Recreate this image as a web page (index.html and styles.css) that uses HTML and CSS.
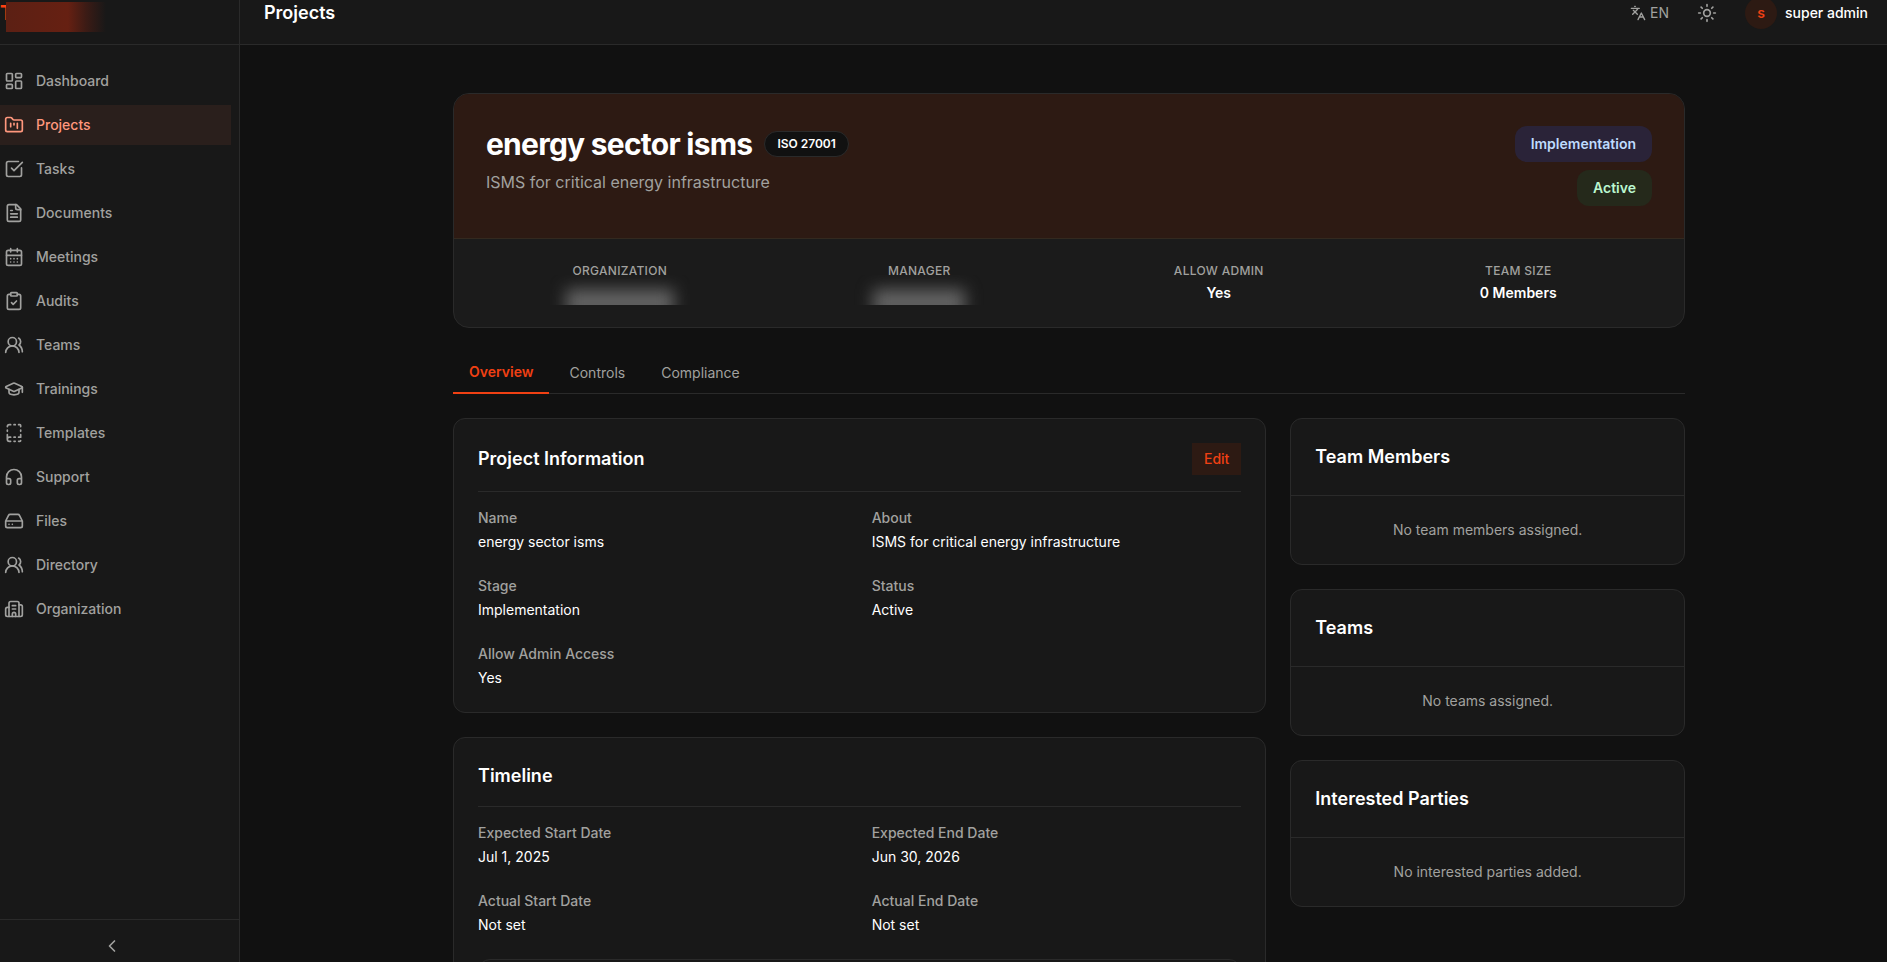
FILE: index.html
```html
<!DOCTYPE html>
<html lang="en">
<head>
  <title>Projects</title>
  <meta charset="UTF-8" />
  <meta name="viewport" content="width=device-width, initial-scale=1">
  <link rel="stylesheet" href="styles.css">
</head>
<body>
  <div class="app">
    <aside class="sidebar">
      <div class="brand"><span class="brand-name">T</span></div>

      <nav class="nav">
        <a href="#"><svg class="icon" viewBox="0 0 24 24"><rect width="7" height="9" x="3" y="3" rx="1"/><rect width="7" height="5" x="14" y="3" rx="1"/><rect width="7" height="9" x="14" y="12" rx="1"/><rect width="7" height="5" x="3" y="16" rx="1"/></svg>Dashboard</a>
        <a href="#" class="active"><svg class="icon" viewBox="0 0 24 24"><path d="M4 20h16a2 2 0 0 0 2-2V8a2 2 0 0 0-2-2h-7.93a2 2 0 0 1-1.66-.9l-.82-1.2A2 2 0 0 0 7.93 3H4a2 2 0 0 0-2 2v13c0 1.1.9 2 2 2Z"/><path d="M8 10v4M12 10v2M16 10v6"/></svg>Projects</a>
        <a href="#"><svg class="icon" viewBox="0 0 24 24"><path d="M21 10.66V19a2 2 0 0 1-2 2H5a2 2 0 0 1-2-2V5a2 2 0 0 1 2-2h12.34"/><path d="m9 11 3 3L22 4"/></svg>Tasks</a>
        <a href="#"><svg class="icon" viewBox="0 0 24 24"><path d="M15 2H6a2 2 0 0 0-2 2v16a2 2 0 0 0 2 2h12a2 2 0 0 0 2-2V7Z"/><path d="M14 2v4a2 2 0 0 0 2 2h4M10 9H8M16 13H8M16 17H8"/></svg>Documents</a>
        <a href="#"><svg class="icon" viewBox="0 0 24 24"><path d="M8 2v4M16 2v4M3 10h18"/><rect width="18" height="18" x="3" y="4" rx="2"/><path d="M8 14h.01M12 14h.01M16 14h.01M8 18h.01M12 18h.01M16 18h.01"/></svg>Meetings</a>
        <a href="#"><svg class="icon" viewBox="0 0 24 24"><rect width="8" height="4" x="8" y="2" rx="1"/><path d="M16 4h2a2 2 0 0 1 2 2v14a2 2 0 0 1-2 2H6a2 2 0 0 1-2-2V6a2 2 0 0 1 2-2h2"/><path d="m9 14 2 2 4-4"/></svg>Audits</a>
        <a href="#"><svg class="icon" viewBox="0 0 24 24"><path d="M18 21a8 8 0 0 0-16 0"/><circle cx="10" cy="8" r="5"/><path d="M22 20c0-3.37-2-6.5-4-8a5 5 0 0 0-.45-8.3"/></svg>Teams</a>
        <a href="#"><svg class="icon" viewBox="0 0 24 24"><path d="M21.42 10.92a1 1 0 0 0-.02-1.84L12.83 5.18a2 2 0 0 0-1.66 0L2.6 9.08a1 1 0 0 0 0 1.83l8.57 3.91a2 2 0 0 0 1.66 0z"/><path d="M22 10v6M6 12.5V16a6 3 0 0 0 12 0v-3.5"/></svg>Trainings</a>
        <a href="#"><svg class="icon" viewBox="0 0 24 24"><path d="M12 17h1.5M12 22h1.5M12 2h1.5M17.5 22H19a1 1 0 0 0 1-1M17.5 2H19a1 1 0 0 1 1 1v1.5M20 14v3h-2.5M20 8.5V10M4 10V8.5M4 19.5V14M4 4.5A2.5 2.5 0 0 1 6.5 2H8M8 22H6.5a1 1 0 0 1 0-5H8"/></svg>Templates</a>
        <a href="#"><svg class="icon" viewBox="0 0 24 24"><path d="M3 14h3a2 2 0 0 1 2 2v3a2 2 0 0 1-2 2H5a2 2 0 0 1-2-2v-7a9 9 0 0 1 18 0v7a2 2 0 0 1-2 2h-1a2 2 0 0 1-2-2v-3a2 2 0 0 1 2-2h3"/></svg>Support</a>
        <a href="#"><svg class="icon" viewBox="0 0 24 24"><path d="M22 12H2M5.45 5.11 2 12v6a2 2 0 0 0 2 2h16a2 2 0 0 0 2-2v-6l-3.45-6.89A2 2 0 0 0 16.76 4H7.24a2 2 0 0 0-1.79 1.11zM6 16h.01M10 16h.01"/></svg>Files</a>
        <a href="#"><svg class="icon" viewBox="0 0 24 24"><path d="M18 21a8 8 0 0 0-16 0"/><circle cx="10" cy="8" r="5"/><path d="M22 20c0-3.37-2-6.5-4-8a5 5 0 0 0-.45-8.3"/></svg>Directory</a>
        <a href="#"><svg class="icon" viewBox="0 0 24 24"><path d="M10 12h4M10 8h4M14 21v-3a2 2 0 0 0-4 0v3"/><path d="M6 10H4a2 2 0 0 0-2 2v7a2 2 0 0 0 2 2h16a2 2 0 0 0 2-2V9a2 2 0 0 0-2-2h-2"/><path d="M6 21V5a2 2 0 0 1 2-2h8a2 2 0 0 1 2 2v16"/></svg>Organization</a>
      </nav>

      <div class="sidebar-footer">
        <button type="button" class="collapse" aria-label="Collapse sidebar"><svg class="icon" viewBox="0 0 24 24"><path d="m15 18-6-6 6-6"/></svg></button>
      </div>
    </aside>

    <div class="page">
      <header class="topbar">
        <h2>Projects</h2>
        <div class="topbar-actions">
          <button type="button" class="lang"><svg class="icon icon-sm" viewBox="0 0 24 24"><path d="m5 8 6 6M4 14l6-6 2-3M2 5h12M7 2h1M22 22l-5-10-5 10M14 18h6"/></svg>EN</button>
          <button type="button" class="theme" aria-label="Toggle theme"><svg class="icon" viewBox="0 0 24 24"><circle cx="12" cy="12" r="4"/><path d="M12 2v2M12 20v2M4.93 4.93l1.41 1.41M17.66 17.66l1.41 1.41M2 12h2M20 12h2M6.34 17.66l-1.41 1.41M19.07 4.93l-1.41 1.41"/></svg></button>
          <button type="button" class="user"><span class="avatar">s</span>super admin</button>
        </div>
      </header>

      <main class="main">
        <div class="container">
          <!-- Project summary -->
          <section class="hero">
            <div class="hero-top">
              <div>
                <div class="hero-title">
                  <h1>energy sector isms</h1>
                  <span class="standard">ISO 27001</span>
                </div>
                <p>ISMS for critical energy infrastructure</p>
              </div>
              <div class="badges">
                <span class="badge badge-stage">Implementation</span>
                <span class="badge badge-status">Active</span>
              </div>
            </div>
            <dl class="stats">
              <div><dt>Organization</dt><dd class="masked"></dd></div>
              <div><dt>Manager</dt><dd class="masked masked-short"></dd></div>
              <div><dt>Allow Admin</dt><dd>Yes</dd></div>
              <div><dt>Team Size</dt><dd>0 Members</dd></div>
            </dl>
          </section>

          <div class="tabs" role="tablist">
            <button type="button" role="tab" class="tab active" aria-selected="true">Overview</button>
            <button type="button" role="tab" class="tab" aria-selected="false">Controls</button>
            <button type="button" role="tab" class="tab" aria-selected="false">Compliance</button>
          </div>

          <div class="columns">
            <div class="stack">
              <section class="card details">
                <div class="card-head">
                  <h3>Project Information</h3>
                  <button type="button" class="edit">Edit</button>
                </div>
                <dl class="fields">
                  <div><dt>Name</dt><dd>energy sector isms</dd></div>
                  <div><dt>About</dt><dd>ISMS for critical energy infrastructure</dd></div>
                  <div><dt>Stage</dt><dd>Implementation</dd></div>
                  <div><dt>Status</dt><dd>Active</dd></div>
                  <div><dt>Allow Admin Access</dt><dd>Yes</dd></div>
                </dl>
              </section>

              <section class="card details">
                <div class="card-head">
                  <h3>Timeline</h3>
                </div>
                <dl class="fields">
                  <div><dt>Expected Start Date</dt><dd>Jul 1, 2025</dd></div>
                  <div><dt>Expected End Date</dt><dd>Jun 30, 2026</dd></div>
                  <div><dt>Actual Start Date</dt><dd>Not set</dd></div>
                  <div><dt>Actual End Date</dt><dd>Not set</dd></div>
                </dl>
                <div class="progress-box"></div>
              </section>
            </div>

            <div class="stack">
              <section class="card">
                <h3 class="side-title">Team Members</h3>
                <p class="empty">No team members assigned.</p>
              </section>
              <section class="card">
                <h3 class="side-title">Teams</h3>
                <p class="empty">No teams assigned.</p>
              </section>
              <section class="card">
                <h3 class="side-title">Interested Parties</h3>
                <p class="empty">No interested parties added.</p>
              </section>
            </div>
          </div>
        </div>
      </main>
    </div>
  </div>
</body>
</html>
```

FILE: styles.css
```css
:root {
  --bg: #111111;
  --panel: #181818;
  --border: #2a2a2a;
  --text: #ffffff;
  --muted: #a1a19f;
  --accent: #f04013;
  --accent-bg: #2d1a13;
}
* { box-sizing: border-box; }
body {
  margin: 0;
  background: var(--bg);
  color: var(--text);
  font-family: Inter, "Liberation Sans", sans-serif;
  font-size: 14px;
  line-height: 20px;
}
h1, h2, h3, p, dl, dd { margin: 0; }
h2, h3 {
  font-size: 18px;
  line-height: 28px;
  font-weight: 600;
}
button {
  font: inherit;
  color: inherit;
  background: none;
  border: 0;
  padding: 0;
  cursor: pointer;
}
.icon {
  width: 20px;
  height: 20px;
  flex: none;
  fill: none;
  stroke: currentColor;
  stroke-width: 2;
  stroke-linecap: round;
  stroke-linejoin: round;
}
.icon-sm {
  width: 16px;
  height: 16px;
}
.app {
  display: flex;
  height: 100vh;
  overflow: hidden;
}

/* Sidebar */
.sidebar {
  display: flex;
  flex-direction: column;
  flex: none;
  width: 240px;
  background: var(--panel);
  border-right: 1px solid var(--border);
}
.brand {
  position: relative;
  height: 45px;
  border-bottom: 1px solid var(--border);
}
.brand-name {
  display: block;
  color: #ff4012;
  font-size: 20px;
  font-weight: 700;
  line-height: 26px;
}
.brand::after {
  content: "";
  position: absolute;
  left: 6px;
  top: 2px;
  width: 100px;
  height: 30px;
  background: linear-gradient(90deg, #5c2014 0%, #662012 62%, #3c1b15 80%, var(--panel) 100%);
}
.nav {
  display: flex;
  flex-direction: column;
  flex: 1;
  gap: 4px;
  padding: 16px 8px 16px 0;
}
.nav a {
  display: flex;
  align-items: center;
  gap: 12px;
  height: 40px;
  padding-left: 4px;
  color: var(--muted);
  font-weight: 500;
  text-decoration: none;
}
.nav a.active {
  background: #2a1f1c;
  color: #ff977d;
}
.sidebar-footer {
  height: 43px;
  padding: 16px 16px 0 0;
  border-top: 1px solid var(--border);
  color: var(--muted);
  text-align: center;
}
.collapse .icon { display: block; }

/* Top bar */
.page {
  display: flex;
  flex-direction: column;
  flex: 1;
  min-width: 0;
}
.topbar {
  display: flex;
  align-items: center;
  justify-content: space-between;
  flex: none;
  height: 45px;
  padding: 0 19px 18px 24px;
  background: var(--panel);
  border-bottom: 1px solid var(--border);
  overflow: hidden;
}
.topbar-actions {
  display: flex;
  align-items: center;
  gap: 28px;
  color: var(--muted);
}
.topbar-actions button {
  display: flex;
  align-items: center;
}
.lang { gap: 4px; }
.topbar-actions .user {
  gap: 8px;
  color: var(--text);
  font-weight: 500;
}
.avatar {
  width: 32px;
  height: 32px;
  border-radius: 50%;
  background: var(--accent-bg);
  color: var(--accent);
  font-weight: 600;
  line-height: 32px;
}

/* Content */
.main {
  flex: 1;
  min-height: 0;
  padding: 48px 24px 0 35px;
  overflow: hidden;
}
.container {
  max-width: 1232px;
  margin: 0 auto;
}
.hero {
  border: 1px solid var(--border);
  border-radius: 16px;
  background: #1b1b1b;
  overflow: hidden;
}
.hero-top {
  display: flex;
  justify-content: space-between;
  padding: 32px;
  background: var(--accent-bg);
  border-bottom: 1px solid #33291f;
}
.hero-title {
  display: flex;
  align-items: center;
  gap: 12px;
  margin-bottom: 8px;
}
h1 {
  font-size: 30px;
  line-height: 36px;
  font-weight: 700;
  letter-spacing: -0.025em;
}
.standard {
  padding: 4px 12px;
  border: 1px solid var(--border);
  border-radius: 13px;
  background: var(--bg);
  font-size: 12px;
  line-height: 16px;
  font-weight: 600;
}
.hero-top p {
  color: var(--muted);
  font-size: 16px;
  line-height: 24px;
}
.badges {
  display: flex;
  flex-direction: column;
  align-items: flex-end;
  gap: 8px;
}
.badge {
  padding: 8px 16px;
  border-radius: 12px;
  font-weight: 600;
}
.badge-stage {
  background: #2a2338;
  color: #bfdbfe;
}
.badge-status {
  background: #25291b;
  color: #bbf7d0;
}
.stats {
  display: grid;
  grid-template-columns: repeat(4, 1fr);
  gap: 16px;
  padding: 24px;
  text-align: center;
}
.stats dt {
  margin-bottom: 4px;
  color: var(--muted);
  font-size: 12px;
  line-height: 16px;
  font-weight: 500;
  letter-spacing: 0.025em;
  text-transform: uppercase;
}
.stats dd {
  height: 20px;
  font-weight: 600;
}
/* hidden values */
.stats .masked {
  position: relative;
  width: 140px;
  height: 30px;
  margin: -8px auto -2px;
  overflow: hidden;
}
.masked::after {
  content: "";
  position: absolute;
  inset: 14px 16px -12px;
  background: #626262;
  filter: blur(8px);
}
.masked-short::after {
  inset: 14px 24px -12px;
}

/* Tabs */
.tabs {
  display: flex;
  gap: 4px;
  height: 42px;
  margin: 24px 0;
  box-shadow: inset 0 -1px var(--border);
}
.tab {
  padding: 0 16px;
  color: var(--muted);
}
.tab.active {
  border-bottom: 2px solid var(--accent);
  color: var(--accent);
  font-weight: 600;
}

/* Cards */
.columns {
  display: grid;
  grid-template-columns: repeat(3, 1fr);
  align-items: start;
  gap: 24px;
}
.stack {
  display: grid;
  gap: 24px;
}
.stack:first-child { grid-column: span 2; }
.card {
  background: var(--panel);
  border: 1px solid var(--border);
  border-radius: 12px;
}
.details { padding: 24px; }
.card-head {
  display: flex;
  align-items: center;
  justify-content: space-between;
  padding-bottom: 16px;
  margin-bottom: 16px;
  border-bottom: 1px solid var(--border);
}
.edit {
  padding: 6px 12px;
  background: var(--accent-bg);
  color: var(--accent);
  font-weight: 500;
}
.fields {
  display: grid;
  grid-template-columns: 1fr 1fr;
  gap: 24px;
}
.fields dt {
  margin-bottom: 4px;
  color: var(--muted);
  font-weight: 500;
}
.progress-box {
  height: 72px;
  margin-top: 24px;
  border: 1px solid var(--border);
  border-radius: 12px;
}
.side-title {
  padding: 24px;
  border-bottom: 1px solid var(--border);
}
.empty {
  padding: 24px;
  color: var(--muted);
  text-align: center;
}
```
